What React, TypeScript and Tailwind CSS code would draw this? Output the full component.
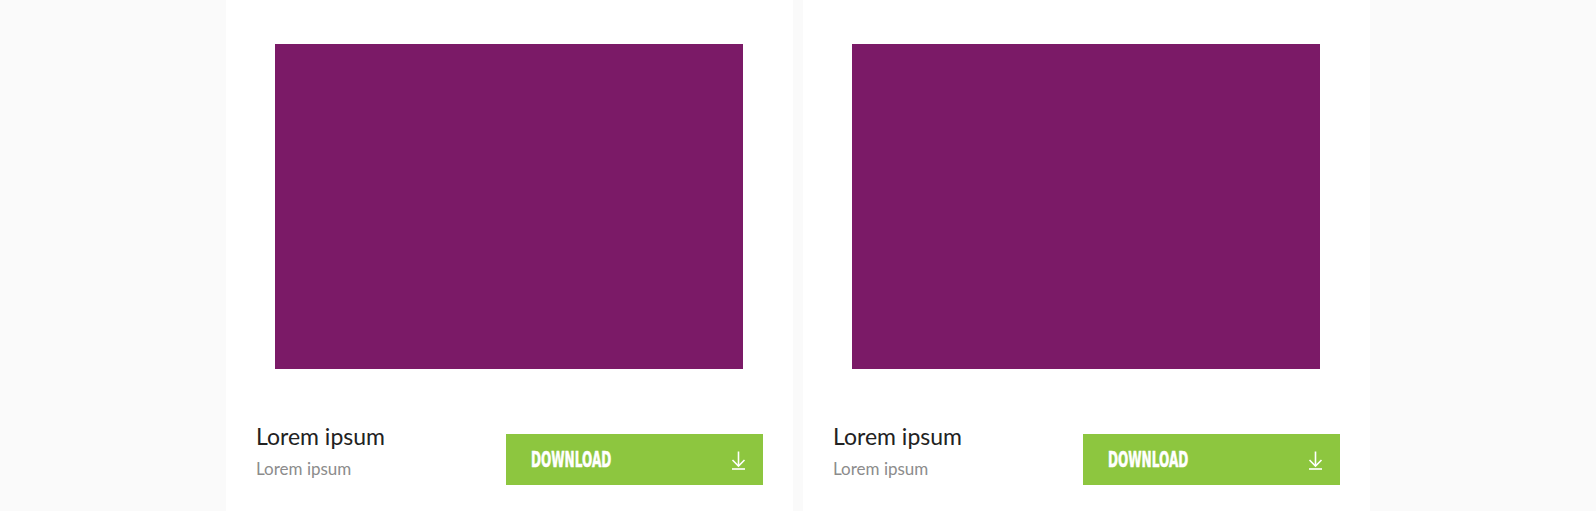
import React from "react";

function DownloadIcon() {
  return (
    <svg width="15" height="20" viewBox="0 0 15 20" fill="none" stroke="white" strokeWidth="1.6">
      <path d="M7.5 1.5 V16" />
      <path d="M1.5 10 L7.5 16 L13.5 10" />
      <path d="M1 19 H14" />
    </svg>
  );
}

function Card() {
  return (
    <div className="w-[567px] h-[511px] bg-white flex flex-col">
      <div className="pt-[44px] pl-[49px] pr-[50px]">
        <div className="w-[468px] h-[325px] bg-[#7b1a67]" />
      </div>
      <div className="flex justify-between items-start px-[30px] mt-[53px]">
        <div style={{ fontFamily: 'Lato, "Open Sans", sans-serif' }}>
          <div className="text-[23px] leading-[28px] text-[#222222]">Lorem ipsum</div>
          <div className="text-[17px] leading-[20px] text-[#8c8c8c] mt-[9px]">Lorem ipsum</div>
        </div>
        <div className="mt-[12px] w-[257px] h-[51px] bg-[#8dc63f] flex items-center justify-between pl-[25px] pr-[17px]">
          <span
            className="text-white font-bold text-[21px] leading-none origin-left scale-x-[0.575] inline-block whitespace-nowrap [-webkit-text-stroke:0.6px_white] mt-[1px]"
            style={{ fontFamily: '"DejaVu Sans", Verdana, sans-serif' }}
          >
            DOWNLOAD
          </span>
          <DownloadIcon />
        </div>
      </div>
    </div>
  );
}

export default function App() {
  return (
    <div className="w-[1596px] h-[511px] bg-[#fafafa] flex justify-center gap-[10px] overflow-hidden">
      <Card />
      <Card />
    </div>
  );
}
